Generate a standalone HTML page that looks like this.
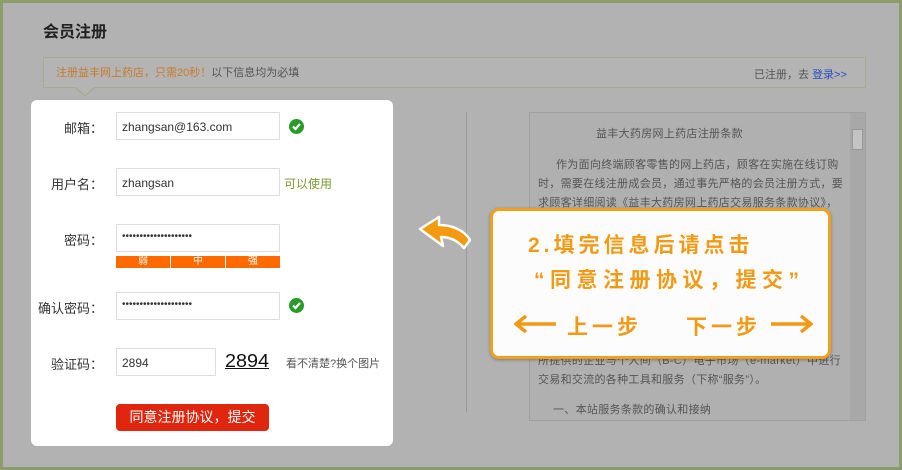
<!DOCTYPE html>
<html><head><meta charset="utf-8"><style>
*{margin:0;padding:0;box-sizing:border-box}
body{width:902px;height:470px;background:#8c9d6c;font-family:"Liberation Sans","Noto Sans CJK SC",sans-serif;position:relative;overflow:hidden}
.bg{position:absolute;left:3px;top:3px;right:3px;bottom:3px;background:#b2b2b2}
.a{position:absolute}
.lbl{position:absolute;width:103px;text-align:right;font-size:13px;color:#333;left:0}
.in{position:absolute;left:116px;width:164px;height:28px;border:1px solid #ddd;background:#fff;font-size:12px;color:#333;padding:7px 0 0 5px}
.ok{position:absolute;left:289px;width:15px;height:15px;border-radius:50%;background:#2a9a2a}
.ok svg{position:absolute;left:0;top:0}
.t{font-size:11px;color:#555;line-height:19px;letter-spacing:0.3px}
.c{font-family:"Liberation Sans","Noto Sans CJK SC",sans-serif;font-weight:bold;color:#f29a16;font-size:21px;letter-spacing:4px;position:absolute}
</style></head><body>
<div class="bg"></div>
<div class="a" style="left:43px;top:18px;font-size:16px;font-weight:bold;color:#222">会员注册</div>
<div class="a" style="left:43px;top:57px;width:823px;height:31px;border:1px solid #a9a98f;background:#b4b4b4"></div>
<div class="a" style="left:56px;top:64px;font-size:11px;color:#c87a2a">注册益丰网上药店，只需20秒！<span style="color:#555">以下信息均为必填</span></div>
<div class="a" style="left:754px;top:66px;font-size:11px;color:#555">已注册，去 <span style="color:#2a4fc0">登录&gt;&gt;</span></div>
<div class="a" style="left:74px;top:87px;width:0;height:0;border-left:11px solid transparent;border-right:11px solid transparent;border-top:10px solid #a9a98f"></div>
<div class="a" style="left:75px;top:86px;width:0;height:0;border-left:10px solid transparent;border-right:10px solid transparent;border-top:9px solid #b4b4b4"></div>

<div class="a" style="left:31px;top:100px;width:362px;height:346px;background:#fff;border-radius:6px"></div>
<div class="lbl" style="top:118px">邮箱：</div>
<div class="in" style="top:112px">zhangsan@163.com</div>
<div class="ok" style="top:119px"><svg width="15" height="15"><path d="M4 7.5l2.5 2.5 4.5-5" stroke="#fff" stroke-width="2.2" fill="none"/></svg></div>
<div class="lbl" style="top:174px">用户名：</div>
<div class="in" style="top:168px">zhangsan</div>
<div class="a" style="left:284px;top:175px;font-size:12px;color:#7a9a30">可以使用</div>
<div class="lbl" style="top:230px">密码：</div>
<div class="in" style="top:224px;font-size:10px;padding-top:6px">••••••••••••••••••••</div>
<div class="a" style="left:116px;top:256px;width:164px;height:12px;background:#ff6a00;display:flex;font-size:10px;color:#fff;line-height:12px;text-align:center">
<div style="flex:1;border-right:1px solid #fff">弱</div><div style="flex:1;border-right:1px solid #fff">中</div><div style="flex:1">强</div></div>
<div class="lbl" style="top:298px">确认密码：</div>
<div class="in" style="top:292px;font-size:10px;padding-top:6px">••••••••••••••••••••</div>
<div class="ok" style="top:298px"><svg width="15" height="15"><path d="M4 7.5l2.5 2.5 4.5-5" stroke="#fff" stroke-width="2.2" fill="none"/></svg></div>
<div class="lbl" style="top:354px">验证码：</div>
<div class="in" style="top:348px;width:100px">2894</div>
<div class="a" style="left:225px;top:351px;font-size:18px;color:#111;text-decoration:underline;letter-spacing:0px;font-family:'Liberation Sans',sans-serif;transform:scaleX(1.1);transform-origin:left">2894</div>
<div class="a" style="left:286px;top:355px;font-size:11px;color:#555">看不清楚?换个图片</div>
<div class="a" style="left:116px;top:404px;width:153px;height:27px;background:#e0260f;border-radius:4px;color:#fff;font-size:14px;text-align:center;line-height:27px">同意注册协议，提交</div>

<div class="a" style="left:466px;top:112px;width:1px;height:300px;background:#999"></div>
<div class="a" style="left:529px;top:112px;width:337px;height:309px;border:1px solid #a0a0a0;background:#b0b0b0"></div>
<div class="a" style="left:850px;top:113px;width:15px;height:307px;background:#a8a8a8"></div>
<div class="a" style="left:852px;top:129px;width:11px;height:21px;background:#c4c4c4;border:1px solid #999"></div>
<div class="a t" style="left:596px;top:125px">益丰大药房网上药店注册条款</div>
<div class="a t" style="left:538px;top:156px;width:306px;text-indent:18px">作为面向终端顾客零售的网上药店，顾客在实施在线订购时，需要在线注册成会员，通过事先严格的会员注册方式，要求顾客详细阅读《益丰大药房网上药店交易服务条款协议》，</div>
<div class="a t" style="left:538px;top:352px;width:306px">所提供的企业与个人间（B-C）电子市场（e-market）中进行交易和交流的各种工具和服务（下称“服务”）。</div>
<div class="a t" style="left:553px;top:401px">一、本站服务条款的确认和接纳</div>

<div class="a" style="left:490px;top:208px;width:341px;height:151px;border:3px solid #f2a01c;border-radius:9px;background:#fcfcfc;box-shadow:0 1px 3px rgba(0,0,0,.3)"></div>
<div class="c" style="left:528px;top:229px">2.填完信息后请点击</div>
<div class="c" style="left:534px;top:264px;letter-spacing:5.5px">“同意注册协议，提交”</div>
<div class="c" style="left:567px;top:311px">上一步</div>
<div class="c" style="left:686px;top:311px">下一步</div>
<svg class="a" style="left:514px;top:314px" width="44" height="20"><path d="M2 10h40M12 2L2 10l10 8" stroke="#f29a16" stroke-width="3.5" fill="none"/></svg>
<svg class="a" style="left:769px;top:314px" width="44" height="20"><path d="M2 10h40M32 2l10 8-10 8" stroke="#f29a16" stroke-width="3.5" fill="none"/></svg>
<svg class="a" style="left:414px;top:210px" width="62" height="44"><path d="M6 19L25 7 25 15C38 15 50 20 56 30L50 38C44 31 36 27 27 27L29 36Z" fill="#f39a12" stroke="#fff" stroke-width="2.5" stroke-linejoin="round"/></svg>
</body></html>
